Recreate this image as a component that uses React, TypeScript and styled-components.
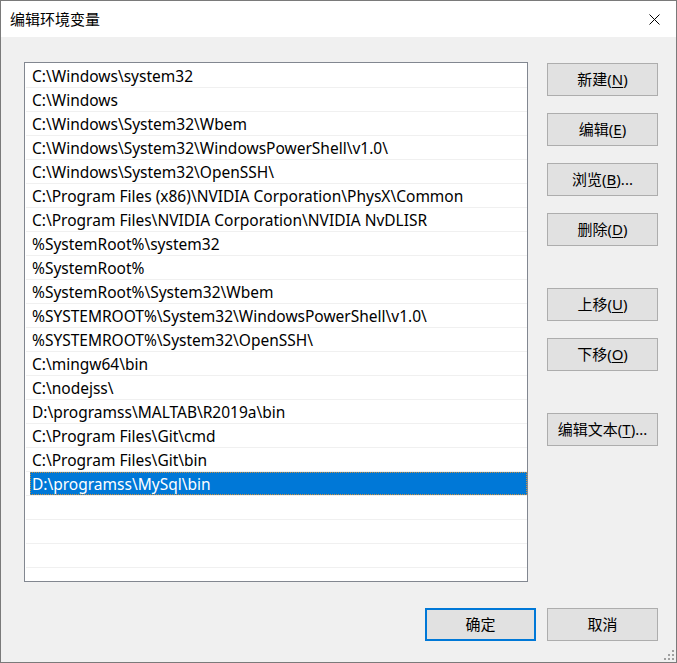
import styled, { createGlobalStyle, css } from "styled-components";

const GlobalStyle = createGlobalStyle`
    html, body {
        margin: 0;
        padding: 0;
        background: #f0f0f0;
    }
    * {
        box-sizing: border-box;
    }
`;

const uiFont = `"Noto Sans", "Noto Sans CJK SC", sans-serif`;

const Window = styled.div`
    width: 677px;
    height: 663px;
    border: 1px solid #7a7a7a;
    display: flex;
    flex-direction: column;
    font-family: ${uiFont};
    font-size: 15px;
    color: #000;
    position: relative;
`;

const TitleBar = styled.div`
    height: 36px;
    background: #fff;
    display: flex;
    align-items: center;
    justify-content: space-between;
    padding-left: 9px;
`;

const Title = styled.span`
    font-size: 15px;
    line-height: 1;
`;

const CloseButton = styled.div`
    width: 46px;
    height: 36px;
    display: flex;
    align-items: center;
    justify-content: center;
    margin-right: -1px;
`;

const Body = styled.div`
    flex: 1;
    background: #f0f0f0;
    padding: 25px 18px 21px 23px;
    display: flex;
    flex-direction: column;
`;

const MainRow = styled.div`
    display: flex;
    gap: 19px;
`;

const ListBox = styled.div`
    width: 504px;
    height: 520px;
    background: #fff;
    border: 1px solid #828790;
    padding: 1px 0 0 1px;
    overflow: hidden;
`;

const Row = styled.div`
    height: 24px;
    border-bottom: 1px solid #f0f0f0;
    display: flex;
    align-items: stretch;
`;

const Label = styled.div<{ $selected?: boolean }>`
    flex: 1;
    margin-left: 4px;
    padding: 2px 0 0 2px;
    display: flex;
    align-items: center;
    white-space: nowrap;
    line-height: 1;
    font-size: 15.5px;
    ${p =>
        p.$selected &&
        css`
            background: #0078d7;
            color: #fff;
            outline: 1px dotted #c89040;
            outline-offset: -1px;
        `}
`;

const ButtonColumn = styled.div`
    width: 111px;
    padding-top: 1px;
    display: flex;
    flex-direction: column;
    gap: 17px;
`;

const Button = styled.div<{ $default?: boolean; $spaced?: boolean }>`
    width: 111px;
    height: 33px;
    background: #e1e1e1;
    border: 1px solid #adadad;
    display: flex;
    align-items: center;
    justify-content: center;
    white-space: nowrap;
    line-height: 1;
    ${p =>
        p.$default &&
        css`
            border: 2px solid #0078d7;
        `}
    ${p =>
        p.$spaced &&
        css`
            margin-top: 25px;
        `}
    u {
        text-underline-offset: 2px;
    }
`;

const Footer = styled.div`
    margin-top: 26px;
    display: flex;
    justify-content: flex-end;
    gap: 11px;
`;

const SizeGrip = styled.svg`
    position: absolute;
    right: 2px;
    bottom: 2px;
`;

const paths = [
    "C:\\Windows\\system32",
    "C:\\Windows",
    "C:\\Windows\\System32\\Wbem",
    "C:\\Windows\\System32\\WindowsPowerShell\\v1.0\\",
    "C:\\Windows\\System32\\OpenSSH\\",
    "C:\\Program Files (x86)\\NVIDIA Corporation\\PhysX\\Common",
    "C:\\Program Files\\NVIDIA Corporation\\NVIDIA NvDLISR",
    "%SystemRoot%\\system32",
    "%SystemRoot%",
    "%SystemRoot%\\System32\\Wbem",
    "%SYSTEMROOT%\\System32\\WindowsPowerShell\\v1.0\\",
    "%SYSTEMROOT%\\System32\\OpenSSH\\",
    "C:\\mingw64\\bin",
    "C:\\nodejss\\",
    "D:\\programss\\MALTAB\\R2019a\\bin",
    "C:\\Program Files\\Git\\cmd",
    "C:\\Program Files\\Git\\bin",
    "D:\\programss\\MySql\\bin",
];

const selectedIndex = 17;
const totalRows = 22;

function App() {
    const rows = Array.from({ length: totalRows }, (_, i) => paths[i] ?? "");

    return (
        <>
            <GlobalStyle />
            <Window>
                <TitleBar>
                    <Title>编辑环境变量</Title>
                    <CloseButton>
                        <svg width="11" height="11" viewBox="0 0 11 11">
                            <path d="M0.5 0.5 L10.5 10.5 M10.5 0.5 L0.5 10.5" stroke="#000" strokeWidth="1" />
                        </svg>
                    </CloseButton>
                </TitleBar>
                <Body>
                    <MainRow>
                        <ListBox>
                            {rows.map((text, i) => (
                                <Row key={i}>
                                    <Label $selected={i === selectedIndex}>{text}</Label>
                                </Row>
                            ))}
                        </ListBox>
                        <ButtonColumn>
                            <Button>新建(<u>N</u>)</Button>
                            <Button>编辑(<u>E</u>)</Button>
                            <Button>浏览(<u>B</u>)...</Button>
                            <Button>删除(<u>D</u>)</Button>
                            <Button $spaced>上移(<u>U</u>)</Button>
                            <Button>下移(<u>O</u>)</Button>
                            <Button $spaced>编辑文本(<u>T</u>)...</Button>
                        </ButtonColumn>
                    </MainRow>
                    <Footer>
                        <Button $default>确定</Button>
                        <Button>取消</Button>
                    </Footer>
                </Body>
                <SizeGrip width="10" height="10" viewBox="0 0 10 10">
                    {[
                        [8, 0],
                        [8, 4],
                        [4, 4],
                        [8, 8],
                        [4, 8],
                        [0, 8],
                    ].map(([x, y]) => (
                        <rect key={`${x}-${y}`} x={x} y={y} width="2" height="2" fill="#a0a0a0" />
                    ))}
                </SizeGrip>
            </Window>
        </>
    );
}

export default App;
